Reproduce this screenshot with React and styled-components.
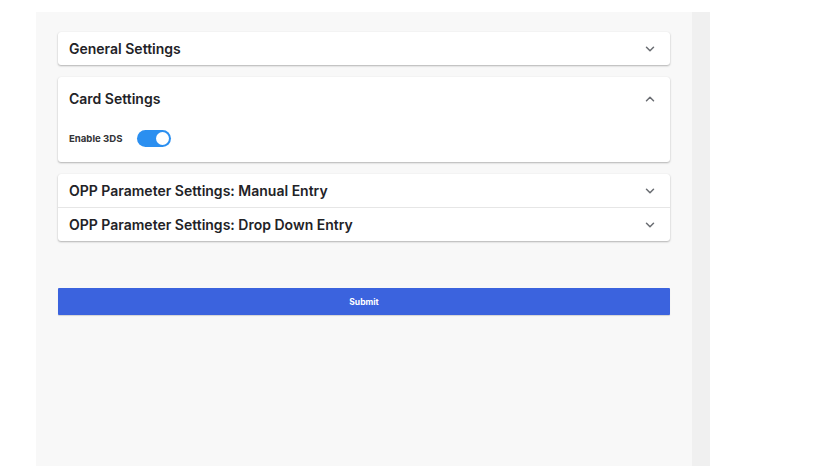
import React from 'react'
import styled, { createGlobalStyle } from 'styled-components'

const GlobalStyle = createGlobalStyle`
    html, body {
        margin: 0;
        padding: 0;
        background: #ffffff;
        font-family: Inter, "Liberation Sans", sans-serif;
    }
`

const Chevron = ({ up }) => (
    <svg width="12" height="12" viewBox="0 0 12 12" fill="none">
        <path
            d={up ? 'M2.5 7.8 L6 4.3 L9.5 7.8' : 'M2.5 4.3 L6 7.8 L9.5 4.3'}
            stroke="#6a6d72"
            strokeWidth="1.5"
            strokeLinecap="round"
            strokeLinejoin="round"
        />
    </svg>
)

const App = () => {
    return (
        <>
            <GlobalStyle />
            <Page>
                <Main>
                    <Card>
                        <Header>
                            <Title>General Settings</Title>
                            <Chevron />
                        </Header>
                    </Card>

                    <Card>
                        <Header expanded>
                            <Title>Card Settings</Title>
                            <Chevron up />
                        </Header>
                        <Body>
                            <Label>Enable 3DS</Label>
                            <Switch on />
                        </Body>
                    </Card>

                    <Card>
                        <Header divided>
                            <Title>OPP Parameter Settings: Manual Entry</Title>
                            <Chevron />
                        </Header>
                        <Header>
                            <Title>OPP Parameter Settings: Drop Down Entry</Title>
                            <Chevron />
                        </Header>
                    </Card>

                    <SubmitButton>Submit</SubmitButton>
                </Main>
                <Gutter />
            </Page>
        </>
    )
}

const Page = styled.div`
    display: flex;
    margin: 12px 0 0 36px;
    width: 674px;
    min-height: calc(100vh - 12px);
`

const Main = styled.div`
    flex: 1;
    background: #f8f8f8;
    padding: 20px 22px;
    display: flex;
    flex-direction: column;
    gap: 12px;
`

const Gutter = styled.div`
    width: 18px;
    background: #f0f0f0;
`

const Card = styled.div`
    background: #ffffff;
    border-radius: 3px;
    box-shadow: 0 1px 2px rgba(0, 0, 0, 0.28), 0 0 1px rgba(0, 0, 0, 0.08);
`

const Header = styled.div`
    display: flex;
    align-items: center;
    justify-content: space-between;
    height: ${p => (p.expanded ? '43px' : p.divided ? '34px' : '33px')};
    padding: 0 14px 0 11px;
    border-bottom: ${p => (p.divided ? '1px solid #e6e6e6' : 'none')};
    box-sizing: border-box;
`

const Title = styled.h3`
    margin: 0;
    font-size: 14px;
    font-weight: 600;
    color: #222226;
`

const Body = styled.div`
    display: flex;
    align-items: center;
    gap: 15px;
    padding: 10px 11px 15px;
`

const Label = styled.span`
    font-size: 9.6px;
    font-weight: 700;
    color: #333336;
`

const Switch = styled.span`
    position: relative;
    display: inline-block;
    width: 34px;
    height: 17px;
    border-radius: 9px;
    background: ${p => (p.on ? '#2b8ff0' : '#c4c4c4')};

    &::after {
        content: '';
        position: absolute;
        top: 2px;
        left: ${p => (p.on ? '19px' : '2px')};
        width: 13px;
        height: 13px;
        border-radius: 50%;
        background: #ffffff;
    }
`

const SubmitButton = styled.button`
    margin-top: 35px;
    height: 27px;
    border: none;
    border-radius: 1px;
    background: #3b63de;
    color: #ffffff;
    font-family: Inter, "Liberation Sans", sans-serif;
    font-size: 8.5px;
    font-weight: 700;
    box-shadow: 0 1px 1px rgba(0, 0, 0, 0.15);
`

export default App
